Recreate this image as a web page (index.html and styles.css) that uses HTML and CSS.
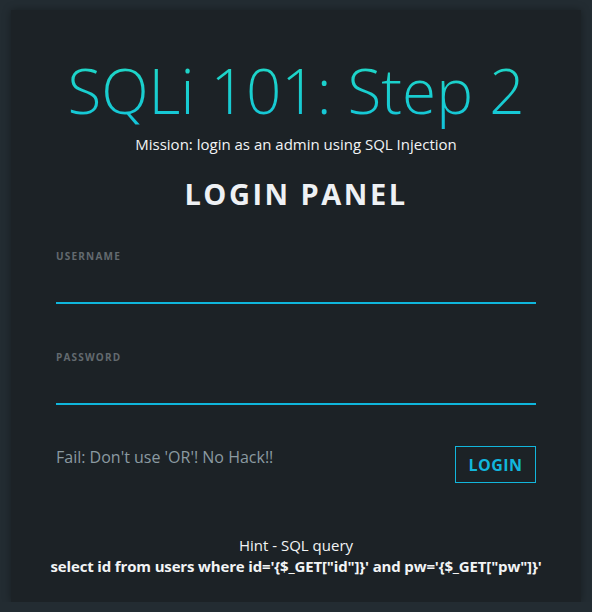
FILE: index.html
```html
<!DOCTYPE html>
<html>
<head>
<meta charset="utf-8">
<link rel="stylesheet" href="styles.css">
</head>
<body>
<div class="card">
  <h1 class="title">SQLi 101: Step 2</h1>
  <p class="mission">Mission: login as an admin using SQL Injection</p>
  <h2 class="panel">LOGIN PANEL</h2>
  <form class="form">
    <div class="field">
      <label class="label">USERNAME</label>
      <div class="input"></div>
    </div>
    <div class="field">
      <label class="label">PASSWORD</label>
      <div class="input"></div>
    </div>
    <div class="actions">
      <span class="fail">Fail: Don't use 'OR'! No Hack!!</span>
      <span class="btn">LOGIN</span>
    </div>
  </form>
  <div class="hint">
    <div class="hint-title">Hint - SQL query</div>
    <div class="query">select id from users where id='{$_GET["id"]}' and pw='{$_GET["pw"]}'</div>
  </div>
</div>
</body>
</html>
```
FILE: styles.css
```css
html, body {
  margin: 0;
  padding: 0;
  background: #232c32;
  font-family: "Open Sans", "Noto Sans", sans-serif;
}
.card {
  width: 570px;
  height: 592px;
  margin: 10px 0 0 11px;
  background: #1c2226;
  box-shadow: 0 0 8px rgba(0,0,0,0.35);
  box-sizing: border-box;
  padding-top: 36px;
  display: flex;
  flex-direction: column;
  align-items: center;
}
.title {
  margin: 0;
  font-size: 62px;
  font-weight: 300;
  line-height: 88px;
  background: linear-gradient(#22dcc0, #12c2dc);
  -webkit-background-clip: text;
  background-clip: text;
  color: transparent;
}
.mission {
  margin: 0;
  font-size: 15px;
  line-height: 20px;
  color: #f2f4f5;
}
.panel {
  margin: 21px 0 0;
  font-size: 29px;
  font-weight: 700;
  letter-spacing: 2.5px;
  line-height: 38px;
  color: #eef1f4;
}
.form {
  width: 480px;
  margin-top: 36px;
  display: flex;
  flex-direction: column;
}
.field {
  display: flex;
  flex-direction: column;
  margin-bottom: 46px;
}
.label {
  font-size: 10px;
  font-weight: 700;
  letter-spacing: 1.2px;
  color: #636a6f;
  line-height: 14px;
}
.input {
  height: 39px;
  border-bottom: 2px solid #0fb6dc;
}
.actions {
  display: flex;
  justify-content: space-between;
  align-items: flex-start;
  margin-top: -5px;
}
.fail {
  font-size: 16px;
  color: #8b9aa1;
  margin-top: 0;
}
.btn {
  width: 79px;
  height: 35px;
  border: 1px solid #12b6dc;
  color: #12b6dc;
  font-size: 16px;
  font-weight: 700;
  letter-spacing: 0.5px;
  display: flex;
  align-items: center;
  justify-content: center;
}
.hint {
  margin-top: 52px;
  text-align: center;
  color: #f2f4f5;
}
.hint-title {
  font-size: 15px;
  line-height: 20px;
}
.query {
  font-size: 15px;
  font-weight: 700;
  line-height: 22px;
  letter-spacing: -0.15px;
}
```
